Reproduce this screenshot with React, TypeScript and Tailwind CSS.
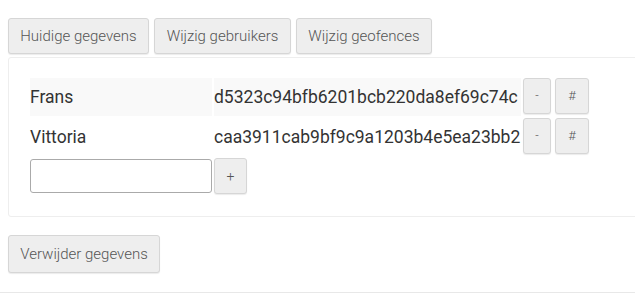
import React from "react";

const btn =
  "bg-[#eeeeee] border border-[#d6d6d6] rounded-[3px] shadow-[0_1px_1px_rgba(0,0,0,0.08)] text-[#555] flex items-center justify-center font-light";

function Row({ name, hash, striped }: { name: string; hash: string; striped?: boolean }) {
  const bg = striped ? "bg-[#f9f9f9]" : "";
  return (
    <div className="flex gap-[2px] h-[38px]">
      <div className={`w-[182px] flex items-center ${bg}`}>{name}</div>
      <div className={`w-[307px] flex items-center whitespace-nowrap ${bg}`}>{hash}</div>
      <div className="flex gap-[4px] h-[36px]">
        <button className={`${btn} w-[28px] h-[36px] text-[12px]`}>-</button>
        <button className={`${btn} w-[34px] h-[36px] text-[13px]`}>#</button>
      </div>
    </div>
  );
}

export default function App() {
  return (
    <div className="w-[635px] h-[298px] overflow-hidden bg-white text-[#333] font-['Roboto',sans-serif]">
      <div className="pt-[18px] px-[8px]">
        <div className="flex gap-[5px] text-[15px]">
          <button className={`${btn} w-[141px] h-[36px]`}>Huidige gegevens</button>
          <button className={`${btn} w-[137px] h-[36px]`}>Wijzig gebruikers</button>
          <button className={`${btn} w-[136px] h-[36px]`}>Wijzig geofences</button>
        </div>
        <div className="mt-[3px] w-[700px] h-[160px] border border-[#eeeeee] rounded-[3px] pt-[20px] pl-[21px] text-[17.5px]">
          <div className="flex flex-col gap-[2px]">
            <Row name="Frans" hash="d5323c94bfb6201bcb220da8ef69c74c" striped />
            <Row name="Vittoria" hash="caa3911cab9bf9c9a1203b4e5ea23bb2" />
            <div className="flex gap-[2px] items-center h-[36px]">
              <input
                type="text"
                className="w-[182px] h-[34px] border border-[#aaaaaa] rounded-[3px] outline-none px-2"
              />
              <button className={`${btn} w-[33px] h-[36px] text-[14px]`}>+</button>
            </div>
          </div>
        </div>
        <button className={`${btn} mt-[18px] w-[152px] h-[38px] text-[15px]`}>
          Verwijder gegevens
        </button>
      </div>
      <div className="mt-[19px] border-t border-[#e8e8e8]" />
    </div>
  );
}
